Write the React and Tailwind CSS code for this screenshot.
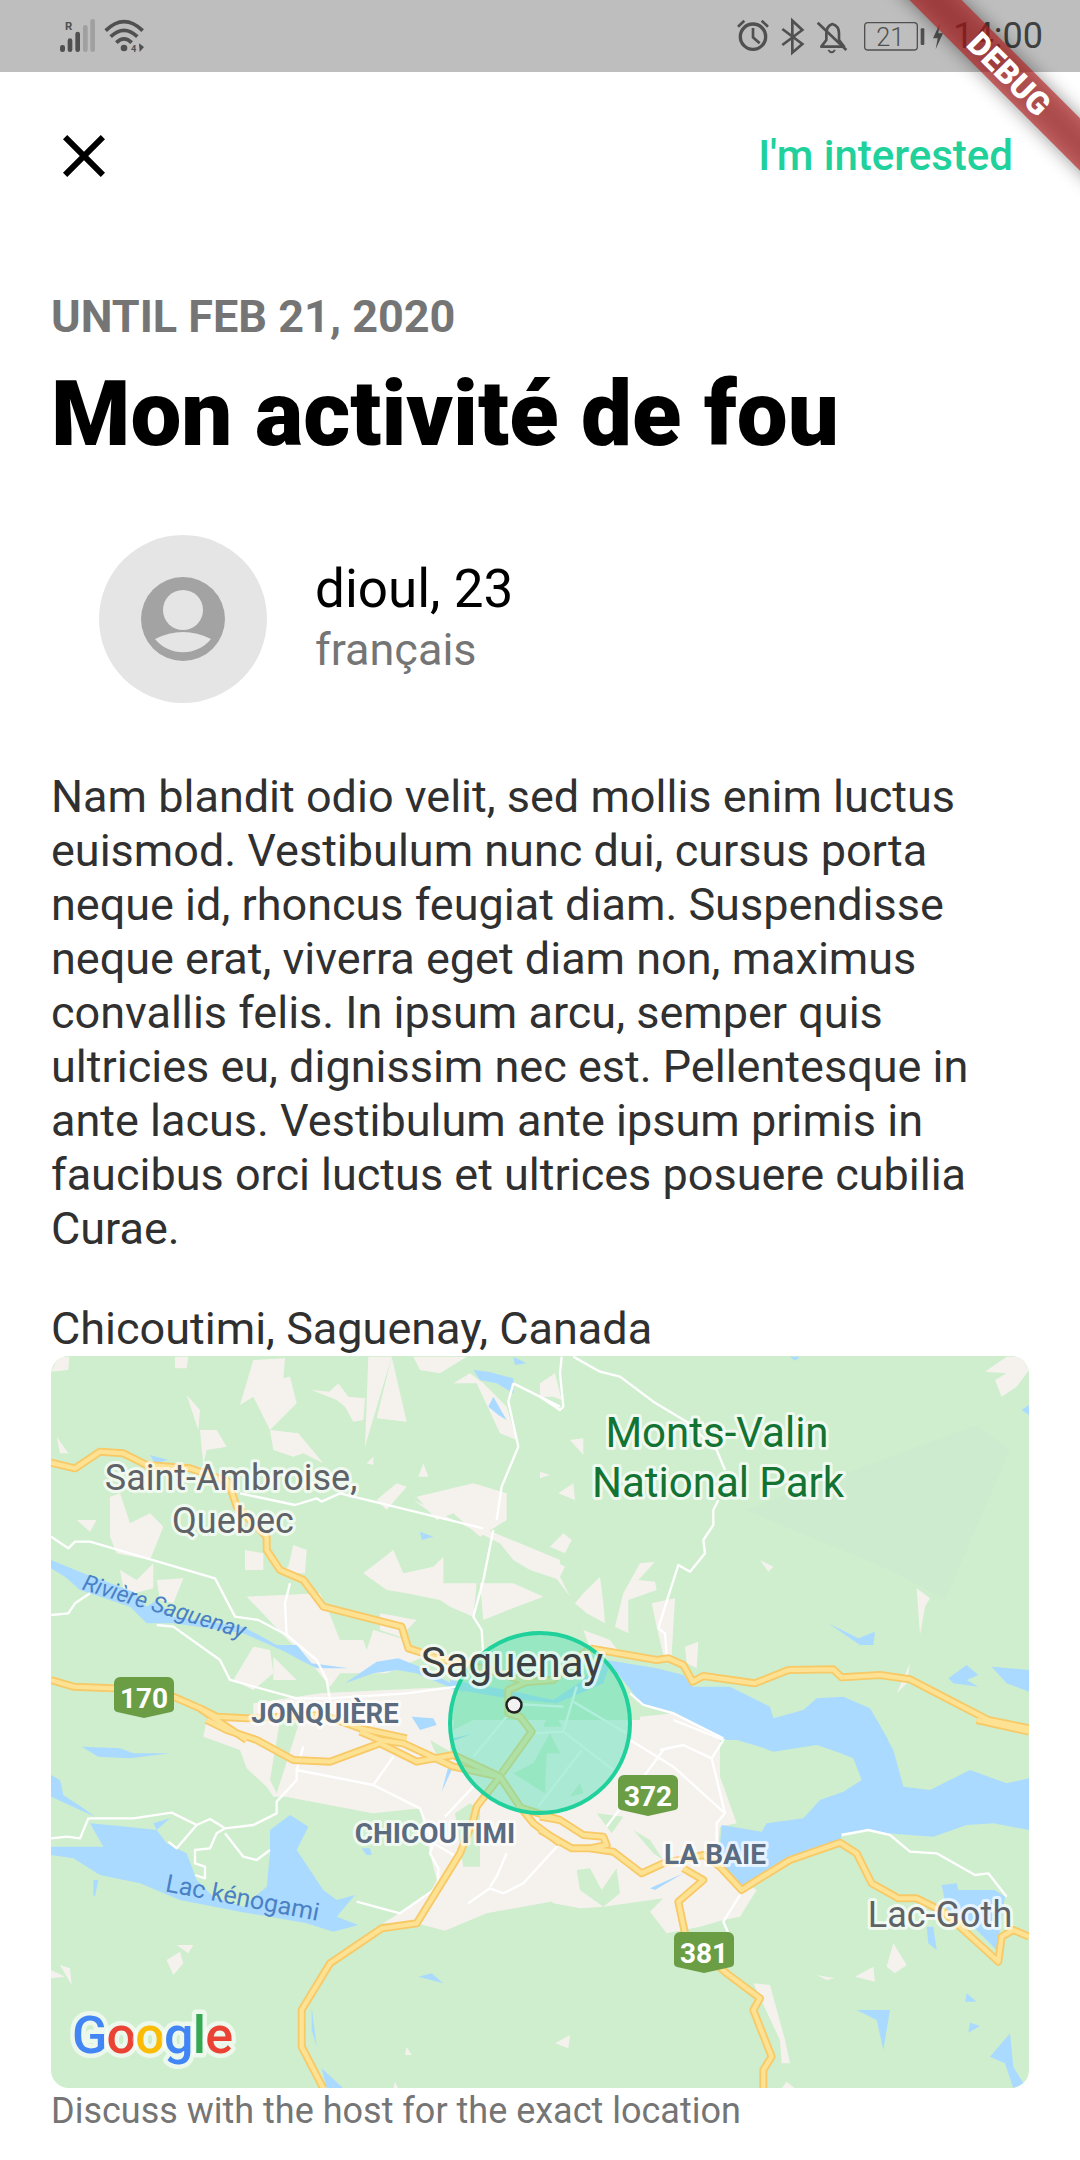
import React from "react";

const TILES = [
  {
    t: "translate(40 1340) scale(.33333)",
    urban: [
      "33,95 55,50 88,50 85,90",
      "405,50 445,50 440,85 405,85",
      "600,195 640,60 735,55 730,115 750,110 770,190 690,270 640,170",
      "815,150 868,155 895,130 925,170 975,175 970,240 940,245 915,200 890,180",
      "690,270 775,280 850,370 790,340 760,350 700,330",
      "1000,235 1055,50 985,50 975,320",
      "1055,50 1100,245 1010,235",
      "440,165 480,210 475,270",
      "480,270 530,270 560,320 500,330 490,375",
      "50,290 85,340 60,340",
      "210,470 240,460 270,550 330,520 370,560 330,660 230,640 210,590",
      "110,540 170,540 150,575",
      "615,630 670,640 670,690 615,690",
      "240,690 290,720 340,670 340,745 285,760 250,745",
      "350,720 430,715 400,790 360,780",
      "745,680 760,615 800,630 795,700 715,700",
      "1135,410 1165,410 1150,370",
      "980,370 1000,350 1000,375",
      "1010,480 1070,430 1100,440 1040,510",
      "1120,480 1190,530 1330,565 1440,610 1560,660 1560,720 1470,690 1420,660 1380,610",
      "1240,130 1290,100 1330,130 1400,200 1430,300 1380,280 1310,130",
      "1120,50 1280,50 1200,100 1140,90",
      "1300,430 1400,460 1400,540 1320,590 1240,520 1190,540 1130,470",
      "970,700 1060,630 1090,700 1180,680 1210,650 1210,730 1310,730 1300,830 1230,800 1200,780 1100,760 1040,750",
      "1320,730 1420,730 1510,770 1430,800 1330,840",
      "620,770 840,760 860,800 900,900 970,900 980,930 1000,870 1100,900 1150,950 1040,1000 900,1000 870,1040 830,990",
      "1020,820 1130,840 1080,890 1020,870",
      "640,920 690,930 700,1000 640,1050 580,1020",
      "700,950 770,1020 700,1020",
      "840,1060 1240,1040 1230,1200 640,1200 640,1090",
    ],
    water: [
      "33,660 130,700 280,755 320,800 350,780 400,830 610,860 710,915 770,915 815,970 925,985 830,985 780,960 735,935 690,915 610,880 400,850 320,850 270,800 120,750 75,710 33,685",
      "915,1030 1010,965 1075,955 1150,985 1250,1040 1280,1060 1200,1030 1130,1000 1070,990 1000,1000",
      "330,345 385,360 345,370",
      "1300,90 1345,95 1420,115 1420,160 1370,130 1320,120",
      "1360,170 1400,240 1375,225 1345,200",
      "1420,50 1460,70 1425,75",
      "1140,575 1180,590 1145,600",
      "1115,1130 1180,1135 1190,1155 1140,1170",
    ],
    minor: [
      "33,590 85,625 105,605 150,605 525,715 585,830 655,840 740,885 830,960 860,1020 870,1080",
      "33,825 85,820 105,790 150,760",
      "350,855 400,860 470,910 540,960 570,1020 770,1075 870,1075 1100,1060 1250,1040",
      "600,460 765,495 830,475 845,485 900,460 1330,565",
      "750,730 735,790 740,885",
      "1420,130 1405,185 1435,320 1385,440 1370,540",
      "1360,570 1330,720 1300,830 1325,870 1330,950",
      "1420,130 1560,200",
    ],
    major: [
      "33,368 105,385 180,335 250,340 320,375 450,385 565,425 590,500 680,590 680,630 720,690 790,720 850,800 1085,860 1105,925 1215,960 1330,985 1461,1026 1539,1020 1650,924",
      "33,1020 100,1040 220,1045 400,1070 480,1105 560,1160 620,1200",
      "480,1105 530,1130 620,1135 850,1125 960,1165 1100,1195",
    ],
  },
  {
    t: "translate(540 1340) scale(.33333)",
    urban: [
      "0,130 45,100 65,180 40,170 0,170",
      "90,300 130,295 130,345",
      "0,395 30,405 0,415",
      "55,460 100,430 105,480",
      "30,620 70,580 95,600 75,640",
      "0,640 40,660 75,680 60,710 90,770 45,710 0,690",
      "105,790 130,760 180,710 190,790 195,850 140,820",
      "250,760 300,670 345,665 295,720 345,725 350,750 265,780 265,880 225,860",
      "335,790 405,775 395,945 370,945 350,860",
      "130,870 210,900 240,940 150,925",
      "435,920 475,905 470,985 440,970",
      "1365,120 1400,100 1335,95 1400,50 1467,50 1467,90 1430,140 1385,170",
      "660,660 700,680 685,695",
      "1130,745 1170,775 1155,800 1140,885",
      "1070,1060 1110,970 1100,1030",
      "300,1130 400,1120 560,1200 300,1200",
    ],
    water: [
      "200,960 350,985 430,1005 458,1040 570,1040 690,1100 700,1135 790,1110 830,1075 910,1070 990,1105 1045,1200 560,1200 400,1115 300,1090 265,1040",
      "865,850 955,895 1005,875 1000,915 960,915",
      "1355,980 1467,990 1467,1055 1400,1030",
      "1225,1015 1280,975 1315,1005 1280,1020 1315,1040 1240,1030",
      "750,50 780,50 765,62",
      "1445,210 1467,195 1467,225",
    ],
    minor: [
      "65,50 60,100 70,200 60,210 0,170",
      "100,50 180,95 240,110 340,185 440,245 530,330 555,390",
      "535,480 520,510 520,555 490,600 495,640 450,695 415,675 375,800 355,865 375,880 380,945",
      "270,1060 310,1095 400,1120 550,1195",
    ],
    major: [
      "150,925 350,960 385,955 430,975 458,1025 490,1008 645,1030 745,990 880,988 905,1012 1020,1005 1110,1018 1345,1140 1467,1165",
    ],
  },
  {
    t: "translate(40 1720) scale(.33333)",
    urban: [
      "490,50 500,0 1230,0 1230,90 1300,200 1140,265 1000,280 740,230 700,230 680,200 620,145 600,90",
      "740,230 1000,280 1030,270 1140,265 1170,400 1190,480 1170,520 1030,610 1130,610 1215,632 1340,580 1560,540 1560,0 1230,0 1240,130 1300,200",
      "380,720 420,695 430,730 400,765",
      "410,675 460,675 445,700",
      "33,750 75,770 33,775",
      "60,735 90,745 95,795",
      "1100,980 1115,1005 1095,1005",
      "1065,1085 1075,1105 1060,1105",
    ],
    green: [
      "1245,280 1290,250 1320,270 1320,440 1270,440",
      "720,0 780,0 710,220 690,180",
      "1170,60 1240,100 1200,130",
    ],
    water: [
      "125,80 240,85 280,100 390,100 270,115 175,110",
      "33,165 60,180 70,225 130,265 165,290 33,230",
      "33,380 190,380 150,310 260,320 350,330 340,310 390,295 350,330 380,370 440,400 470,480 520,530 610,560 680,500 690,400 690,330 750,285 805,320 770,390 850,510 890,540 945,525 890,590 955,615 880,635 800,610 600,575 420,540 300,490 180,465 100,415 33,405",
      "1135,770 1175,760 1210,790",
      "815,860 830,980 815,930",
      "845,1045 910,1105 860,1105",
      "160,480 175,480 165,530 195,560 160,525",
      "1205,215 1225,140 1235,150",
      "965,385 990,385 995,405 980,405",
    ],
    minor: [
      "33,355 80,350 120,355 145,295 280,295 395,278 470,315 510,297 555,325 640,315 710,280 710,245 770,180 770,150 1000,195 1140,265 1180,370 1170,400 1195,445 1195,500 1080,580 950,545",
      "1000,195 1060,110",
      "770,150 790,80",
      "470,315 410,385 385,365",
      "555,325 530,340 510,385 465,390 465,430 495,440 495,475 465,465",
      "555,340 610,410 650,420 690,390",
      "1215,290 1300,200",
      "1180,370 1250,410",
      "1560,370 1450,490 1390,520 1350,505 1285,550",
      "1400,400 1370,470 1350,500",
    ],
    major: [
      "500,0 560,30 650,60 760,120 870,125 1020,70 1130,125 1240,105 1380,170",
      "960,35 1020,60 1090,70 1240,140 1380,170 1440,260 1480,310 1560,370",
      "1380,170 1310,260 1300,300 1260,400 1130,610 1025,625 870,730 785,870 785,980 850,1105",
      "1430,260 1560,300",
    ],
  },
  {
    t: "translate(540 1720) scale(.33333)",
    urban: [
      "0,0 540,0 540,170 590,310 540,320 530,430 650,510 600,590 550,600 480,620 380,640 330,575 370,535 190,560 120,565 40,550 0,510",
      "45,970 90,945 85,985",
      "1040,740 1060,670 1100,735 1065,760",
      "945,770 1000,740 1005,785",
      "830,765 885,775 860,780",
      "640,790 690,795 735,960 750,1030 725,1030 720,960",
      "725,1105 740,1085 765,1105",
    ],
    green: [
      "110,450 150,445 185,510 230,445 240,520 190,560 120,510",
      "170,280 250,290 215,340",
      "280,330 340,400 370,420 330,360",
      "535,40 660,90 560,180",
    ],
    water: [
      "440,0 1010,0 1060,90 1090,200 1170,210 1290,150 1400,190 1467,175 1467,330 1360,310 1280,315 1180,350 1040,340 985,330 905,340 900,365 750,415 665,465 605,500 535,440 545,315 665,335 680,310 790,295 840,240 910,215 965,180 940,115 890,95 830,75 700,95 660,80 540,45",
      "1205,495 1250,490 1255,510 1365,510 1395,530 1370,690 1300,620 1220,570",
      "1160,620 1180,620 1190,690 1165,670",
      "330,505 430,460 345,510",
      "950,870 1050,870 1030,990 1010,900",
      "1280,820 1310,845 1275,845",
      "1290,908 1320,918 1285,938",
      "1410,940 1420,1040 1450,1090 1420,1105 1395,1030 1350,1010",
    ],
    minor: [
      "400,0 550,60 515,115 555,280 530,310 530,370",
      "360,90 430,75 515,115",
      "370,90 200,320",
      "270,60 400,140 555,280",
      "905,345 985,330 1050,345 1110,395 1190,400 1305,465 1345,460 1400,530",
      "600,525 550,605 570,650",
    ],
    major: [
      "0,290 60,300 130,345 190,350 200,375 150,385 95,385 0,330",
      "150,385 220,395 305,460 370,430 490,405 540,440 605,510 660,475 750,420 900,368 950,400 995,490 1075,535 1130,535 1210,575 1375,725 1385,650 1420,630 1467,650",
      "430,445 490,480 415,545 435,640 490,700 560,760 660,835 640,870 695,1010 670,1050 670,1105",
      "1310,0 1467,35",
    ],
  },
  {
    // the part of Saguenay under the circle
    t: "translate(430 1620) scale(.33333)",
    green: [
      "80,230 150,240 130,300 70,330",
      "340,320 365,255 395,320",
      "250,460 310,430 360,340 390,400 350,400 345,520",
      "420,530 450,490 460,520",
      "545,280 580,245 590,300",
    ],
    water: [
      "60,180 230,210 370,240 460,180 500,120 540,130 520,190 380,250 230,235 60,205",
      "70,355 125,342 70,362",
    ],
    minor: [
      "310,340 400,335 550,450",
      "400,335 440,200",
      "430,245 590,340",
      "130,410 230,290",
      "325,560 455,390",
      "225,250 400,260",
    ],
    major: [
      "215,460 305,335 270,290 235,280 235,210 290,185",
    ],
  },
];

function Layer({ name, render }) {
  return TILES.map((tile) => (
    <g key={tile.t} transform={tile.t}>
      {(tile[name] || []).map((pts) => render(pts))}
    </g>
  ));
}

function Label({ x, y, size = 36, color = "#5f6368", weight = 400, children }) {
  return (
    <text
      x={x}
      y={y}
      fontSize={size}
      fontWeight={weight}
      fill={color}
      textAnchor="middle"
      stroke="#ffffff"
      strokeOpacity=".7"
      strokeWidth="6"
      strokeLinejoin="round"
      paintOrder="stroke"
    >
      {children}
    </text>
  );
}

function Shield({ x, y, label }) {
  return (
    <g transform={`translate(${x} ${y})`}>
      <path d="M6 0H54a6 6 0 0 1 6 6V32a4 4 0 0 1-3 3L30 41 3 35a4 4 0 0 1-3-3V6a6 6 0 0 1 6-6z" fill="#6b9e44" />
      <text x="30" y="31" fontSize="28" fontWeight="700" fill="#fff" textAnchor="middle">
        {label}
      </text>
    </g>
  );
}

function MapView() {
  return (
    <div className="mt-[2px] h-[732px] w-full overflow-hidden rounded-[18px]">
      <svg viewBox="51 1356 978 732" className="block h-full w-full">
        <rect x="51" y="1356" width="978" height="732" fill="#ceeece" />
        <path d="M745 1510L977 1425 1010 1450 945 1600 890 1570z" fill="#cdebce" />
        <Layer name="urban" render={(pts) => <polygon key={pts} points={pts} fill="#f5f2ee" />} />
        <Layer name="green" render={(pts) => <polygon key={pts} points={pts} fill="#ceeece" />} />
        <Layer name="water" render={(pts) => <polygon key={pts} points={pts} fill="#aadaff" />} />
        <Layer
          name="minor"
          render={(pts) => <polyline key={pts} points={pts} fill="none" stroke="#fff" strokeWidth="7" strokeLinejoin="round" />}
        />
        <Layer
          name="major"
          render={(pts) => <polyline key={pts} points={pts} fill="none" stroke="#f8c967" strokeWidth="24" strokeLinejoin="round" />}
        />
        <Layer
          name="major"
          render={(pts) => <polyline key={pts} points={pts} fill="none" stroke="#fde293" strokeWidth="13" strokeLinejoin="round" />}
        />

        <circle cx="540" cy="1723" r="90" fill="#5fe0b8" fillOpacity=".5" stroke="#20d19c" strokeWidth="4" />
        <circle cx="514" cy="1705" r="7.5" fill="#f2f2f2" stroke="#222" strokeWidth="2.5" />

        <Label x="231" y="1490">Saint-Ambroise,</Label>
        <Label x="233" y="1533">Quebec</Label>
        <Label x="717" y="1447" size="42" color="#137333">Monts-Valin</Label>
        <Label x="718" y="1497" size="42" color="#137333">National Park</Label>
        <Label x="512" y="1677" size="42" color="#3c4043">Saguenay</Label>
        <Label x="325" y="1723" size="27.5" weight="700" color="#5b6b80">JONQUIÈRE</Label>
        <Label x="435" y="1843" size="28" weight="700" color="#5b6b80">CHICOUTIMI</Label>
        <Label x="715" y="1864" size="28" weight="700" color="#5b6b80">LA BAIE</Label>
        <Label x="940" y="1927">Lac-Goth</Label>
        <text x="162" y="1614" fontSize="23" fontStyle="italic" fill="#4a80c4" textAnchor="middle" transform="rotate(17 162 1614)">
          Rivière Saguenay
        </text>
        <text x="241" y="1906" fontSize="25" fill="#4a80c4" textAnchor="middle" transform="rotate(11 241 1906)">
          Lac kénogami
        </text>

        <Shield x="114" y="1677" label="170" />
        <Shield x="618" y="1775" label="372" />
        <Shield x="674" y="1932" label="381" />

        <text x="72" y="2053" fontSize="52" fontWeight="500" stroke="#fff" strokeOpacity=".6" strokeWidth="9" strokeLinejoin="round" paintOrder="stroke" textLength="161">
          <tspan fill="#4285f4">G</tspan>
          <tspan fill="#ea4335">o</tspan>
          <tspan fill="#fbbc05">o</tspan>
          <tspan fill="#4285f4">g</tspan>
          <tspan fill="#34a853">l</tspan>
          <tspan fill="#ea4335">e</tspan>
        </text>
      </svg>
    </div>
  );
}

function StatusBar() {
  return (
    <div className="flex h-[72px] items-center justify-between bg-[#bebebe] pl-[40px] pr-[37px]">
      <svg viewBox="0 0 390 216" className="h-[72px] w-[130px]" fill="none" stroke="#505050">
        <text x="86" y="90" fontSize="34" fontWeight="700" fill="#505050" stroke="none" textAnchor="middle">R</text>
        <g stroke="none" fill="#505050">
          <rect x="60" y="135" width="15" height="21" rx="7" />
          <rect x="83" y="115" width="14" height="41" rx="7" />
          <rect x="106" y="95" width="14" height="61" rx="7" />
          <rect x="129" y="75" width="14" height="81" rx="7" fill="#a0a0a0" />
          <rect x="151" y="57" width="14" height="99" rx="7" fill="#a0a0a0" />
        </g>
        <path d="M197 92Q252 38 308 92" strokeWidth="11" />
        <path d="M212 110Q252 72 292 110" strokeWidth="11" />
        <path d="M229 128Q252 105 275 128" strokeWidth="11" />
        <circle cx="252" cy="144" r="10" fill="#505050" stroke="none" />
        <text x="281" y="155" fontSize="28" fontWeight="700" fill="#505050" stroke="none" textAnchor="middle">4</text>
        <path d="M297 130L312 141 299 156z" fill="#505050" stroke="none" />
      </svg>
      <div className="flex items-center">
        <svg viewBox="0 0 672 216" className="h-[72px] w-[224px]" fill="none" stroke="#505050">
          <circle cx="72" cy="110" r="38" strokeWidth="10" />
          <path d="M72 84V112L92 130" strokeWidth="8" />
          <path d="M27 80L46 62M98 62L117 80" strokeWidth="8" />
          <path d="M160 87L220 132 190 158V62L220 90 160 135" strokeWidth="8" />
          <path d="M277 140L292 120V102Q292 78 310 72Q330 78 330 100V120L345 140Z" strokeWidth="8" strokeLinejoin="round" />
          <path d="M266 68L352 150" strokeWidth="8" />
          <path d="M298 150Q308 164 318 150" strokeWidth="6" />
          <rect x="407" y="68" width="158" height="82" rx="10" strokeWidth="4" />
          <rect x="575" y="85" width="11" height="50" rx="3" fill="#505050" stroke="none" />
          <text x="484" y="138" fontSize="76" fontWeight="300" fill="#505050" stroke="none" textAnchor="middle">21</text>
          <path d="M632 72L612 115H626L620 148 642 100H628Z" fill="#505050" stroke="none" />
        </svg>
        <span className="text-[36px] leading-none text-[#404040]">14:00</span>
      </div>
    </div>
  );
}

function DebugBanner() {
  return (
    <div className="pointer-events-none absolute right-0 top-0 h-[300px] w-[300px] overflow-hidden">
      <div className="absolute left-[75px] top-[51px] h-[37px] w-[300px] rotate-45 bg-black/40 blur-[9px]" />
      <div className="absolute left-[75px] top-[51px] flex h-[37px] w-[300px] rotate-45 items-center justify-center bg-[#b71c1ca0] pl-[12px] text-[32px] font-black leading-none text-white">
        DEBUG
      </div>
    </div>
  );
}

export default function App() {
  return (
    <div className="relative h-[2160px] w-[1080px] overflow-hidden bg-white font-[family-name:Roboto,sans-serif]">
      <StatusBar />
      <div className="flex h-[168px] items-center justify-between pl-[48px] pr-[67px]">
        <svg viewBox="0 0 24 24" className="h-[72px] w-[72px]" fill="#000">
          <path d="M19 6.41L17.59 5 12 10.59 6.41 5 5 6.41 10.59 12 5 17.59 6.41 19 12 13.41 17.59 19 19 17.59 13.41 12z" />
        </svg>
        <span className="text-[42px] font-medium leading-none text-[#20d19c]">I'm interested</span>
      </div>
      <div className="px-[51px]">
        <div className="mt-[52px] text-[45px] font-bold leading-[50px] text-[#757575]">UNTIL FEB 21, 2020</div>
        <h1 className="mt-[20px] text-[90.6px] font-black leading-[105px] text-black">Mon activité de fou</h1>
        <div className="ml-[48px] mt-[68px] flex items-center gap-[48px]">
          <div className="flex h-[168px] w-[168px] items-center justify-center rounded-full bg-[#e5e5e5]">
            <svg viewBox="0 0 84 84" className="h-[84px] w-[84px]">
              <circle cx="42" cy="42" r="42" fill="#a3a3a3" />
              <circle cx="42" cy="33" r="20" fill="#e5e5e5" />
              <path d="M14 62Q42 48 70 62A36 36 0 0 1 14 62z" fill="#e5e5e5" />
            </svg>
          </div>
          <div className="flex flex-col gap-[4px] pb-[4px]">
            <span className="text-[53px] leading-[62px] text-black">dioul, 23</span>
            <span className="text-[45px] leading-[52px] text-[#757575]">français</span>
          </div>
        </div>
        <p className="mt-[67px] text-[45px] leading-[54px] text-[#303030]">
          Nam blandit odio velit, sed mollis enim luctus euismod. Vestibulum nunc dui, cursus porta neque id, rhoncus feugiat diam. Suspendisse neque erat, viverra eget diam non, maximus convallis felis. In ipsum arcu, semper quis ultricies eu, dignissim nec est. Pellentesque in ante lacus. Vestibulum ante ipsum primis in faucibus orci luctus et ultrices posuere cubilia Curae.
        </p>
        <div className="mt-[48px] text-[45px] leading-[50px] text-[#303030]">Chicoutimi, Saguenay, Canada</div>
        <MapView />
        <div className="mt-[2px] text-[36px] leading-[42px] text-[#757575]">Discuss with the host for the exact location</div>
      </div>
      <DebugBanner />
    </div>
  );
}
